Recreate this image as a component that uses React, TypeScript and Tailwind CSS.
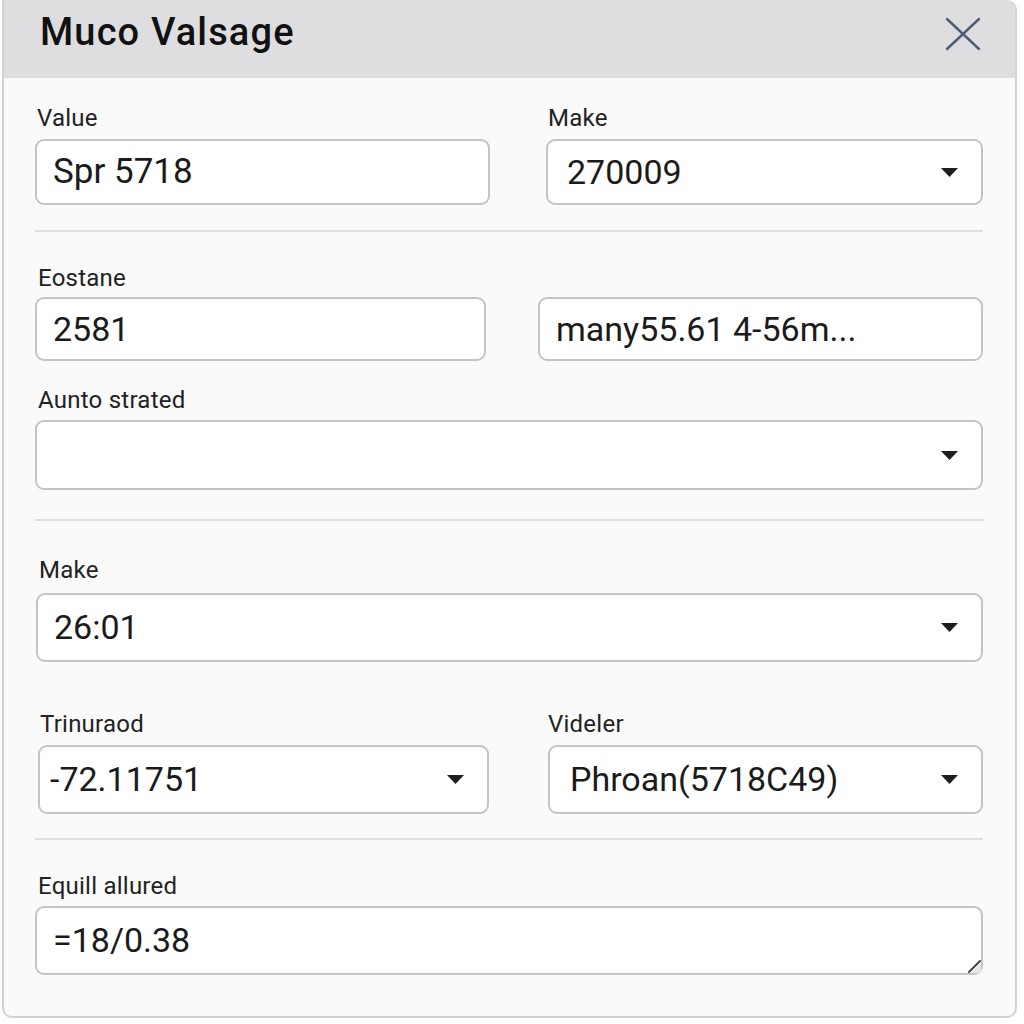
import React from "react";

const font = { fontFamily: "Roboto, 'Noto Sans', Arial, sans-serif" };

function Caret() {
  return (
    <svg width="19" height="11" viewBox="0 0 19 11" className="shrink-0">
      <path d="M1 1 L18 1 L9.5 10 Z" fill="#1f1f1f" />
    </svg>
  );
}

function Label({ text, className = "" }: { text: string; className?: string }) {
  return (
    <div className={`h-[26px] leading-[26px] text-[24px] tracking-[0.01em] text-[#222] ${className}`}>
      {text}
    </div>
  );
}

function Field({
  value,
  select,
  h,
  pl = "pl-[16px]",
  size = "text-[34px]",
}: {
  value: string;
  select?: boolean;
  h: string;
  pl?: string;
  size?: string;
}) {
  return (
    <div
      className={`${h} ${pl} pr-[22px] flex items-center justify-between rounded-[9px] border-2 border-[#c4c4c4] bg-white`}
    >
      <span className={`${size} text-[#1b1b1b] whitespace-nowrap`}>{value}</span>
      {select && <Caret />}
    </div>
  );
}

function Divider({ className = "" }: { className?: string }) {
  return <div className={`h-[2px] bg-[#dedede] ${className}`} />;
}

export default function App() {
  return (
    <div className="w-[1024px] h-[1024px] bg-white" style={font}>
      <div className="ml-[2px] w-[1015px] h-[1018px] rounded-b-[10px] rounded-tr-[10px] border-2 border-t-0 border-[#d2d2d4] bg-[#fafafa] overflow-hidden flex flex-col">
        <div className="h-[78px] shrink-0 bg-[#dedee0] flex items-center justify-between pl-[36px] pr-[34px]">
          <h1 className="text-[38px] font-medium tracking-[0.03em] text-[#111] pb-[14px]">Muco Valsage</h1>
          <svg width="36" height="34" viewBox="0 0 36 34" className="mb-[10px]">
            <path d="M2 2 L34 32 M34 2 L2 32" stroke="#4c5d77" strokeWidth="2.4" strokeLinecap="round" />
          </svg>
        </div>

        <div className="pl-[31px] pr-[32px] pt-[27px]">
          <div className="grid grid-cols-[455px_1fr] gap-x-[56px]">
            <div>
              <Label text="Value" className="pl-[2px]" />
              <div className="mt-[8px]">
                <Field value="Spr 5718" h="h-[66px]" size="text-[35px]" />
              </div>
            </div>
            <div>
              <Label text="Make" className="pl-[2px]" />
              <div className="mt-[8px]">
                <Field value="270009" select h="h-[66px]" pl="pl-[19px]" />
              </div>
            </div>
          </div>

          <Divider className="mt-[25px]" />

          <div className="mt-[33px] grid grid-cols-[451px_1fr] gap-x-[52px]">
            <div>
              <Label text="Eostane" className="pl-[3px]" />
              <div className="mt-[6px]">
                <Field value="2581" h="h-[64px]" />
              </div>
            </div>
            <div>
              <div className="h-[26px]" />
              <div className="mt-[6px]">
                <Field value="many55.61 4-56m..." h="h-[64px]" pl="pl-[16px]" />
              </div>
            </div>
          </div>

          <Label text="Aunto strated" className="mt-[26px] pl-[3px]" />
          <div className="mt-[7px]">
            <Field value="" select h="h-[70px]" />
          </div>

          <Divider className="mt-[29px]" />

          <Label text="Make" className="mt-[36px] pl-[4px]" />
          <div className="mt-[10px] pl-[1px]">
            <Field value="26:01" select h="h-[69px]" />
          </div>

          <div className="mt-[49px] pl-[3px] grid grid-cols-[451px_1fr] gap-x-[59px]">
            <div>
              <Label text="Trinuraod" className="pl-[2px]" />
              <div className="mt-[8px]">
                <Field value="-72.11751" select h="h-[69px]" pl="pl-[10px]" />
              </div>
            </div>
            <div>
              <Label text="Videler" />
              <div className="mt-[8px]">
                <Field value="Phroan(5718C49)" select h="h-[69px]" pl="pl-[20px]" />
              </div>
            </div>
          </div>

          <Divider className="mt-[24px]" />

          <Label text="Equill allured" className="mt-[33px] pl-[3px]" />
          <div className="mt-[7px] relative">
            <Field value="=18/0.38" h="h-[69px]" />
            <svg width="16" height="16" viewBox="0 0 16 16" className="absolute right-[1px] bottom-[1px]">
              <path d="M15 5 L15 15 L5 15 Z" fill="#e4e4e6" />
              <path d="M3 14 L14 3" stroke="#444" strokeWidth="2" strokeLinecap="round" />
            </svg>
          </div>
        </div>
      </div>
    </div>
  );
}
